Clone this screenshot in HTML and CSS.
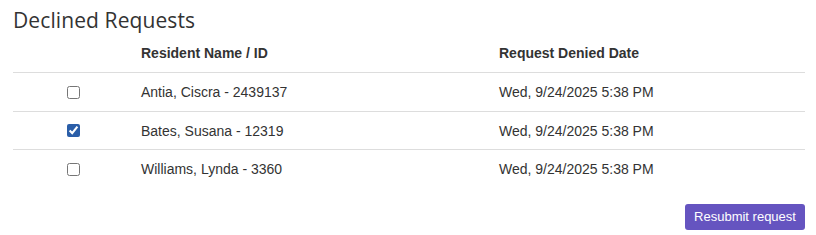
FILE: index.html
```html
<!DOCTYPE html>
<html>
  <head>
    <title>Declined Requests</title>
    <link rel="stylesheet" href="styles.css">
  </head>
  <body>
    <div class="panel">
      <h2 class="title">Declined Requests</h2>
      <table class="requests">
        <tr>
          <th class="col-check"></th>
          <th class="col-name">Resident Name / ID</th>
          <th>Request Denied Date</th>
        </tr>
        <tr>
          <td class="col-check"><input type="checkbox"></td>
          <td>Antia, Ciscra - 2439137</td>
          <td>Wed, 9/24/2025 5:38 PM</td>
        </tr>
        <tr>
          <td class="col-check"><input type="checkbox" checked></td>
          <td>Bates, Susana - 12319</td>
          <td>Wed, 9/24/2025 5:38 PM</td>
        </tr>
        <tr>
          <td class="col-check"><input type="checkbox"></td>
          <td>Williams, Lynda - 3360</td>
          <td>Wed, 9/24/2025 5:38 PM</td>
        </tr>
      </table>
      <div class="actions">
        <button class="button">Resubmit request</button>
      </div>
    </div>
  </body>
</html>
```

FILE: styles.css
```css
body {
  margin: 0;
  background-color: #fff;
  font-family: "Liberation Sans", Arial, sans-serif;
  color: #333;
}
.panel {
  padding: 7px 11px 0 13px;
}
.title {
  margin: 0;
  font-family: "Open Sans", sans-serif;
  font-weight: 400;
  font-size: 21px;
  line-height: 26px;
  letter-spacing: 0.1px;
  color: #333;
}
.requests {
  width: 100%;
  border-collapse: collapse;
  font-size: 14px;
}
.requests th {
  text-align: left;
  font-weight: bold;
  padding: 12px 8px 11px;
  border-bottom: 1px solid #ddd;
}
.requests td {
  padding: 11px 8px 10.5px;
  height: 16px;
  border-bottom: 1px solid #ddd;
}
.requests tr:last-child td {
  border-bottom: none;
}
.col-check {
  width: 104px;
  text-align: center;
}
.col-name {
  width: 342px;
}
.requests input[type="checkbox"] {
  display: block;
  margin: 0 auto;
  width: 13px;
  height: 13px;
  accent-color: #2a5ea8;
}
.actions {
  display: flex;
  justify-content: flex-end;
  padding-top: 16px;
}
.button {
  background-color: #6554c0;
  color: #fff;
  border: none;
  border-radius: 3px;
  padding: 0;
  width: 120px;
  height: 26px;
  font-family: "Liberation Sans", Arial, sans-serif;
  font-size: 13px;
  font-weight: normal;
  cursor: pointer;
}
```
